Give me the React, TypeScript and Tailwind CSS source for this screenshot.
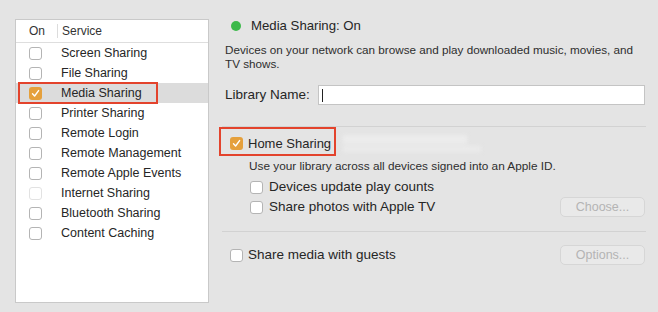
import React from 'react';

const services = [
  { name: 'Screen Sharing', on: false },
  { name: 'File Sharing', on: false },
  { name: 'Media Sharing', on: true, selected: true },
  { name: 'Printer Sharing', on: false },
  { name: 'Remote Login', on: false },
  { name: 'Remote Management', on: false },
  { name: 'Remote Apple Events', on: false },
  { name: 'Internet Sharing', on: false, disabled: true },
  { name: 'Bluetooth Sharing', on: false },
  { name: 'Content Caching', on: false },
];

const Check: React.FC<{ on?: boolean; disabled?: boolean }> = ({ on, disabled }) =>
  on ? (
    <div className="w-[13px] h-[13px] rounded-[3px] bg-[#e5a03c] flex items-center justify-center shrink-0">
      <svg width="9" height="9" viewBox="0 0 9 9" fill="none">
        <path d="M1.5 4.8 L3.6 7 L7.6 1.6" stroke="white" strokeWidth="1.4" strokeLinecap="round" strokeLinejoin="round" />
      </svg>
    </div>
  ) : (
    <div
      className={`w-[13px] h-[13px] rounded-[3px] bg-white border shrink-0 ${
        disabled ? 'border-[#e2e2e2]' : 'border-[#b4b4b4]'
      }`}
    />
  );

const ServiceList: React.FC = () => (
  <div className="ml-[15px] mt-[19px] w-[194px] h-[284px] bg-white border border-[#c9c9c9] flex flex-col">
    <div className="h-[23px] flex items-center border-b border-[#dedede] text-[12px] text-[#333]">
      <div className="w-[41px] pl-[13px]">On</div>
      <div className="h-[14px] border-l border-[#dcdcdc] pl-[4px] leading-[14px]">Service</div>
    </div>
    {services.map((s) => (
      <div
        key={s.name}
        className={`relative h-[20px] flex items-center text-[12.5px] text-[#262626] ${
          s.selected ? 'bg-[#dcdcdc]' : ''
        }`}
      >
        <div className="w-[45px] pl-[13px]">
          <Check on={s.on} disabled={s.disabled} />
        </div>
        <span>{s.name}</span>
        {s.selected && (
          <div className="absolute left-[2px] top-[-1px] w-[140px] h-[22px] border-[2.5px] border-[#e3432c]" />
        )}
      </div>
    ))}
  </div>
);

const MacButton: React.FC<{ label: string }> = ({ label }) => (
  <div className="w-[85px] h-[20px] rounded-[5px] border border-[#d6d6d6] bg-[#e9e9e9] flex items-center justify-center text-[12.5px] text-[#b4b4b4]">
    {label}
  </div>
);

export default function App() {
  return (
    <div
      className="w-[658px] h-[312px] bg-[#e4e4e4] flex overflow-hidden"
      style={{ fontFamily: '"Liberation Sans", Arial, sans-serif' }}
    >
      <ServiceList />

      <div className="ml-[13px] w-[424px] flex flex-col text-[#262626]">
        <div className="mt-[19px] h-[14px] flex items-center pl-[9px]">
          <div className="w-[10px] h-[10px] rounded-full bg-[#3cb94a]" />
          <span className="ml-[10px] text-[13.2px]">Media Sharing: On</span>
        </div>

        <p className="mt-[10px] pl-[3px] text-[11.7px] leading-[14px] text-[#2e2e2e]">
          Devices on your network can browse and play downloaded music, movies, and
          <br />
          TV shows.
        </p>

        <div className="mt-[14px] flex items-center pl-[3px]">
          <span className="text-[13.5px] w-[93px]">Library Name:</span>
          <div className="w-[327px] h-[20px] bg-white border border-[#c4c4c4] flex items-center pl-[3px]">
            <div className="w-px h-[13px] bg-[#222]" />
          </div>
        </div>

        <div className="mt-[21px] h-px bg-[#d2d2d2]" />

        <div className="relative mt-[9px] h-[14px] flex items-center pl-[8px]">
          <Check on />
          <span className="ml-[5px] text-[13px]">Home Sharing</span>
          <div className="absolute left-[-3px] top-[-9px] w-[117px] h-[29px] border-[2.5px] border-[#e3432c]" />
          <div className="ml-[12px] flex flex-col gap-[2px] blur-[2px]">
            <div className="w-[124px] h-[9px] bg-[#ececec]" />
            <div className="w-[138px] h-[6px] bg-[#ebebeb]" />
          </div>
        </div>

        <p className="mt-[9px] pl-[27px] text-[11.8px] leading-[14px] text-[#2e2e2e]">
          Use your library across all devices signed into an Apple ID.
        </p>

        <div className="mt-[7px] h-[14px] flex items-center pl-[28px]">
          <Check />
          <span className="ml-[6px] text-[13.5px]">Devices update play counts</span>
        </div>

        <div className="mt-[6px] h-[14px] flex items-center pl-[28px]">
          <Check />
          <span className="ml-[6px] text-[13.5px]">Share photos with Apple TV</span>
          <div className="ml-auto mr-[1px]">
            <MacButton label="Choose..." />
          </div>
        </div>

        <div className="mt-[17px] h-px bg-[#d2d2d2]" />

        <div className="mt-[13px] h-[20px] flex items-center pl-[8px]">
          <Check />
          <span className="ml-[5px] text-[13.5px]">Share media with guests</span>
          <div className="ml-auto mr-[1px]">
            <MacButton label="Options..." />
          </div>
        </div>
      </div>
    </div>
  );
}
